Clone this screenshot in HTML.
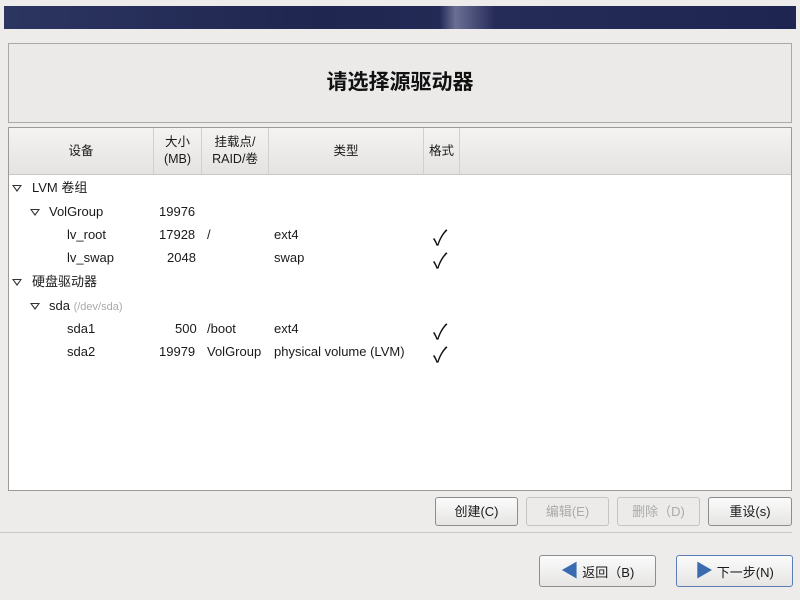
<!DOCTYPE html>
<html><head><meta charset="utf-8"><style>
body{margin:0;width:800px;height:600px;background:#edeceb;font-family:"Liberation Sans","Noto Sans CJK SC",sans-serif;font-size:13px;color:#1a1a1a;position:relative;overflow:hidden}
.ab{position:absolute}
.banner{left:4px;top:6px;width:792px;height:23px;background:linear-gradient(90deg,#2c3560,#1f2750 40%,#222a55 55%,#6a6f95 57%,#262c58 62%,#1e2550)}
.title{left:8px;top:43px;width:782px;height:78px;border:1px solid #a9a9a9;background:#ebeae9;text-align:center;line-height:78px;font-size:21px;font-weight:bold;color:#111}
.tbl{left:8px;top:127px;width:782px;height:362px;border:1px solid #9a9a9a;background:#fff}
.hdr{left:0;top:0;width:782px;height:46px;background:linear-gradient(#f4f3f2,#e4e3e2);border-bottom:1px solid #c8c8c8}
.h{position:absolute;top:0;height:46px;display:flex;align-items:center;justify-content:center;text-align:center;font-size:12.5px;line-height:17px;border-right:1px solid #d0d0d0}
.r{position:absolute;font-size:13px;line-height:16px}
.gr{color:#aaa;font-size:11px}
.tri{position:absolute;width:0;height:0;border-left:5px solid transparent;border-right:5px solid transparent;border-top:7px solid #333}
.tri::after{content:"";position:absolute;left:-3px;top:-6px;border-left:3px solid transparent;border-right:3px solid transparent;border-top:4px solid #fff}
.btn{position:absolute;height:27px;border:1px solid #8d8d8d;border-radius:3px;background:linear-gradient(#fbfbfb,#e6e5e4);text-align:center;line-height:27px;font-size:13px}
.dis{color:#aaa;border-color:#c4c4c4;background:#ecebea}
.ck{position:absolute;font-size:21px;color:#111}
</style></head><body>
<div class="ab banner"></div>
<div class="ab title">请选择源驱动器</div>
<div class="ab tbl">
 <div class="ab hdr">
  <div class="h" style="left:0;width:144px">设备</div>
  <div class="h" style="left:145px;width:47px">大小<br>(MB)</div>
  <div class="h" style="left:193px;width:66px">挂载点/<br>RAID/卷</div>
  <div class="h" style="left:260px;width:154px">类型</div>
  <div class="h" style="left:415px;width:35px">格式</div>
 </div>
 <div class="tri" style="left:3px;top:57px"></div><div class="r" style="left:23px;top:52px">LVM 卷组</div>
 <div class="tri" style="left:21px;top:81px"></div><div class="r" style="left:40px;top:76px">VolGroup</div><div class="r" style="left:150px;top:76px">19976</div>
 <div class="r" style="left:58px;top:99px">lv_root</div><div class="r" style="left:150px;top:99px">17928</div><div class="r" style="left:198px;top:99px">/</div><div class="r" style="left:265px;top:99px">ext4</div><div class="ck" style="left:424px;top:94px">✓</div>
 <div class="r" style="left:58px;top:122px">lv_swap</div><div class="r" style="left:158px;top:122px">2048</div><div class="r" style="left:265px;top:122px">swap</div><div class="ck" style="left:424px;top:117px">✓</div>
 <div class="tri" style="left:3px;top:151px"></div><div class="r" style="left:23px;top:146px">硬盘驱动器</div>
 <div class="tri" style="left:21px;top:175px"></div><div class="r" style="left:40px;top:170px">sda <span class="gr">(/dev/sda)</span></div>
 <div class="r" style="left:58px;top:193px">sda1</div><div class="r" style="left:166px;top:193px">500</div><div class="r" style="left:198px;top:193px">/boot</div><div class="r" style="left:265px;top:193px">ext4</div><div class="ck" style="left:424px;top:188px">✓</div>
 <div class="r" style="left:58px;top:216px">sda2</div><div class="r" style="left:150px;top:216px">19979</div><div class="r" style="left:198px;top:216px">VolGroup</div><div class="r" style="left:265px;top:216px">physical volume (LVM)</div><div class="ck" style="left:424px;top:211px">✓</div>
</div>
<div class="btn" style="left:435px;top:497px;width:81px">创建(C)</div>
<div class="btn dis" style="left:526px;top:497px;width:81px">编辑(E)</div>
<div class="btn dis" style="left:617px;top:497px;width:81px">删除（D)</div>
<div class="btn" style="left:708px;top:497px;width:82px">重设(s)</div>
<div class="ab" style="left:0;top:532px;width:792px;height:1px;background:#c9c9c9"></div>
<div class="btn" style="left:539px;top:555px;width:115px;height:30px;line-height:30px"><span style="color:#3a6ab0;font-size:18px">◀</span> 返回（B)</div>
<div class="btn" style="left:676px;top:555px;width:115px;height:30px;line-height:30px;border-color:#5b7fb5"><span style="color:#3a6ab0;font-size:18px">▶</span> 下一步(N)</div>
</body></html>
